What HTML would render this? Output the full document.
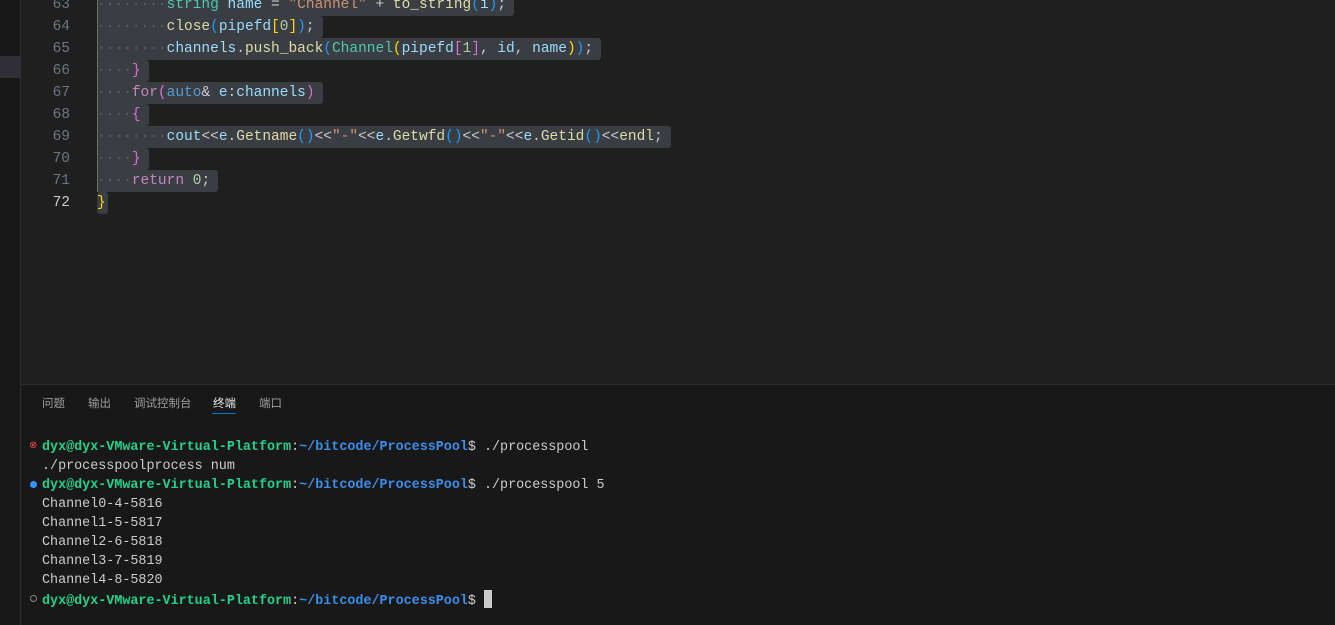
<!DOCTYPE html>
<html><head><meta charset="utf-8"><style>
*{margin:0;padding:0;box-sizing:border-box}
body{width:1335px;height:625px;background:#1f1f1f;overflow:hidden;position:relative;font-family:"Liberation Mono",monospace}
.strip{position:absolute;left:0;top:0;width:21px;height:625px;background:#181818;border-right:1px solid #2b2b2b}
.act{position:absolute;left:0;top:56px;width:21px;height:22px;background:#2f2f35}
.ln{position:absolute;left:40px;width:30px;text-align:right;font-size:14.5px;line-height:22px;color:#6e7681}
.code{position:absolute;left:97px;font-size:14.5px;line-height:22px;height:22px;color:#cccccc;white-space:pre}
.sel{display:inline-block;height:22px;vertical-align:top;background:#3a3d41;border-radius:3px;padding-right:8px}
.d{color:#5a5d63}
.k{color:#c586c0}.t{color:#4ec9b0}.v{color:#9cdcfe}.f{color:#dcdcaa}.s{color:#ce9178}.n{color:#b5cea8}.b{color:#569cd6}
.y{color:#ffd700}.p{color:#da70d6}.bl{color:#179fff}
.panel{position:absolute;left:22px;top:384px;width:1313px;height:241px;border-top:1px solid #2b2b2b;background:#181818}
.tabs{position:absolute;top:395px;left:42px;font-family:"Liberation Sans","Noto Sans CJK SC",sans-serif;font-size:11.5px;color:#9d9d9d}
.tabs span{position:absolute;white-space:nowrap}
.term{position:absolute;left:42px;font-size:13.4px;line-height:19px;color:#cccccc;white-space:pre}
.g{color:#23d18b;font-weight:bold}.bb{color:#3b8eea;font-weight:bold}
</style></head><body>
<div class="strip"></div><div class="act"></div>
<div class="ln" style="top:-6px">63</div>
<div class="ln" style="top:16px">64</div>
<div class="ln" style="top:38px">65</div>
<div class="ln" style="top:60px">66</div>
<div class="ln" style="top:82px">67</div>
<div class="ln" style="top:104px">68</div>
<div class="ln" style="top:126px">69</div>
<div class="ln" style="top:148px">70</div>
<div class="ln" style="top:170px">71</div>
<div class="ln" style="top:192px;color:#cccccc">72</div>
<div class="code" style="top:-6px"><span class="sel"><span class="d">········</span><span class="t">string</span> <span class="v">name</span> = <span class="s">"Channel"</span> + <span class="f">to_string</span><span class="bl">(</span><span class="v">i</span><span class="bl">)</span>;</span></div>
<div class="code" style="top:16px"><span class="sel"><span class="d">········</span><span class="f">close</span><span class="bl">(</span><span class="v">pipefd</span><span class="y">[</span><span class="n">0</span><span class="y">]</span><span class="bl">)</span>;</span></div>
<div class="code" style="top:38px"><span class="sel"><span class="d">········</span><span class="v">channels</span>.<span class="f">push_back</span><span class="bl">(</span><span class="t">Channel</span><span class="y">(</span><span class="v">pipefd</span><span class="p">[</span><span class="n">1</span><span class="p">]</span>, <span class="v">id</span>, <span class="v">name</span><span class="y">)</span><span class="bl">)</span>;</span></div>
<div class="code" style="top:60px"><span class="sel"><span class="d">····</span><span class="p">}</span></span></div>
<div class="code" style="top:82px"><span class="sel"><span class="d">····</span><span class="k">for</span><span class="p">(</span><span class="b">auto</span>&amp; <span class="v">e</span>:<span class="v">channels</span><span class="p">)</span></span></div>
<div class="code" style="top:104px"><span class="sel"><span class="d">····</span><span class="p">{</span></span></div>
<div class="code" style="top:126px"><span class="sel"><span class="d">········</span><span class="v">cout</span>&lt;&lt;<span class="v">e</span>.<span class="f">Getname</span><span class="bl">()</span>&lt;&lt;<span class="s">"-"</span>&lt;&lt;<span class="v">e</span>.<span class="f">Getwfd</span><span class="bl">()</span>&lt;&lt;<span class="s">"-"</span>&lt;&lt;<span class="v">e</span>.<span class="f">Getid</span><span class="bl">()</span>&lt;&lt;<span class="f">endl</span>;</span></div>
<div class="code" style="top:148px"><span class="sel"><span class="d">····</span><span class="p">}</span></span></div>
<div class="code" style="top:170px"><span class="sel"><span class="d">····</span><span class="k">return</span> <span class="n">0</span>;</span></div>
<div class="code" style="top:192px"><span class="sel" style="padding-right:2px"><span class="y">}</span></span></div>
<div style="position:absolute;left:97px;top:0;width:1px;height:192px;background:#707070"></div>
<div class="panel"></div>
<div class="tabs">
<span style="left:0">问题</span><span style="left:46px">输出</span><span style="left:92px">调试控制台</span><span style="left:171px;color:#e7e7e7">终端</span><span style="left:217px">端口</span>
</div>
<div style="position:absolute;left:212px;top:413px;width:24px;height:1px;background:#0078d4"></div>
<div style="position:absolute;left:29px;top:440px;color:#f14c4c;font-size:10px;font-family:'DejaVu Sans',sans-serif">⊗</div>
<div style="position:absolute;left:30px;top:481px;width:7px;height:7px;border-radius:50%;background:#3794ff"></div>
<div style="position:absolute;left:30px;top:595px;width:7px;height:7px;border-radius:50%;border:1px solid #888"></div>
<div class="term" style="top:438px"><span class="g">dyx@dyx-VMware-Virtual-Platform</span>:<span class="bb">~/bitcode/ProcessPool</span>$ ./processpool</div>
<div class="term" style="top:457px">./processpoolprocess num</div>
<div class="term" style="top:476px"><span class="g">dyx@dyx-VMware-Virtual-Platform</span>:<span class="bb">~/bitcode/ProcessPool</span>$ ./processpool 5</div>
<div class="term" style="top:495px">Channel0-4-5816</div>
<div class="term" style="top:514px">Channel1-5-5817</div>
<div class="term" style="top:533px">Channel2-6-5818</div>
<div class="term" style="top:552px">Channel3-7-5819</div>
<div class="term" style="top:571px">Channel4-8-5820</div>
<div class="term" style="top:590px"><span class="g">dyx@dyx-VMware-Virtual-Platform</span>:<span class="bb">~/bitcode/ProcessPool</span>$ <span style="display:inline-block;width:8px;height:18px;background:#cccccc;vertical-align:-4px"></span></div>
</body></html>
